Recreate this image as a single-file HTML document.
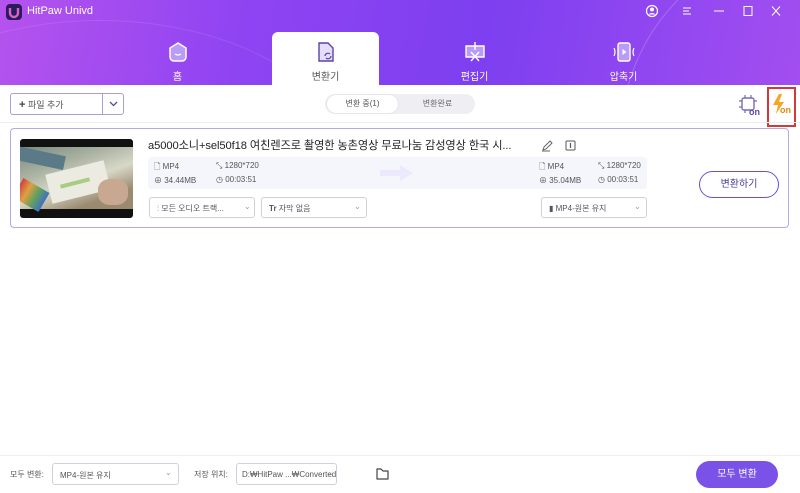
<!DOCTYPE html>
<html><head><meta charset="utf-8">
<style>
*{box-sizing:border-box;margin:0;padding:0}
body{width:800px;height:493px;overflow:hidden;background:#fff;font-family:"Liberation Sans","Noto Sans CJK KR",sans-serif;position:relative;color:#333}
.hdr{position:absolute;left:0;top:0;width:800px;height:85px;background:linear-gradient(100deg,#b553ee 0%,#8f44f2 30%,#7d3ff0 60%,#a24ef0 100%);overflow:hidden}
.arc{position:absolute;border:1px solid rgba(255,255,255,.1);border-radius:50%}
.abs{position:absolute}
.tab{position:absolute;top:32px;width:107px;height:53px;text-align:center;color:#fff;font-size:10px}
.tab svg{display:block;margin:9px auto 5px}
.sel{background:#fff;border-radius:6px 6px 0 0;color:#555}
.btn{position:absolute;border:1px solid #d0d0dc;border-radius:3px;background:#fff;font-size:9px;color:#555}
.sm{font-size:8px;color:#555;position:absolute}
</style></head><body>
<div class="hdr">
<div class="arc" style="left:620px;top:-60px;width:400px;height:400px;border-color:rgba(255,255,255,.2)"></div>
<div class="arc" style="left:-150px;top:20px;width:500px;height:300px"></div>
</div>
<div class="abs" style="left:6px;top:4px;width:16px;height:16px;border-radius:4px;background:#2a1a5e"><svg width="16" height="16"><path d="M4 4v5a4 4 0 0 0 8 0V4" stroke="#e060c0" stroke-width="2.4" fill="none"/></svg></div>
<div class="abs" style="left:27px;top:5px;color:#fff;font-size:11px">HitPaw Univd</div>
<svg class="abs" style="left:645px;top:4px" width="150" height="14">
<circle cx="7" cy="7" r="5.5" fill="none" stroke="#fff" stroke-width="1.2"/><circle cx="7" cy="5.5" r="2" fill="#fff"/><path d="M3.5 10.5a4 3 0 0 1 7 0" fill="#fff"/>
<path d="M38 4h8M38 7h6M38 10h8" stroke="#fff" stroke-width="1"/>
<path d="M69 7h10" stroke="#fff" stroke-width="1"/>
<rect x="99" y="2.5" width="8" height="9" fill="none" stroke="#fff" stroke-width="1"/>
<path d="M127 2.5l8 9M135 2.5l-8 9" stroke="#fff" stroke-width="1"/>
</svg>
<div class="tab" style="left:124px"><svg width="20" height="22" viewBox="0 0 20 22"><path d="M10 2l8 5v9a4 4 0 0 1-4 4H6a4 4 0 0 1-4-4V7z" fill="#b89cf7" stroke="#fff" stroke-width="1.5"/><path d="M7 13q3 2 6 0" stroke="#fff" stroke-width="1.3" fill="none"/></svg>홈</div>
<div class="tab sel" style="left:272px"><svg width="20" height="22" viewBox="0 0 20 22"><path d="M3 2h9l5 5v13H3z" fill="#e6dcfb" stroke="#5a45a8" stroke-width="1.4"/><path d="M9 15a3 3 0 0 1 5-2M15 15a3 3 0 0 1-5 2" stroke="#5a45a8" stroke-width="1.2" fill="none"/></svg>변환기</div>
<div class="tab" style="left:421px"><svg width="26" height="22" viewBox="0 0 26 22"><path d="M4 5h18v11H4z" fill="#b89cf7" stroke="#fff" stroke-width="1.4"/><path d="M13 1v8M9 20l8-9M17 20l-8-9" stroke="#fff" stroke-width="1.4"/></svg>편집기</div>
<div class="tab" style="left:570px"><svg width="26" height="22" viewBox="0 0 26 22"><rect x="7" y="2" width="12" height="18" rx="2" fill="#b89cf7" stroke="#fff" stroke-width="1.4"/><path d="M11.5 8l4 3-4 3z" fill="#fff"/><path d="M3 7q2 4 0 8M23 7q-2 4 0 8" stroke="#fff" stroke-width="1.2" fill="none"/></svg>압축기</div>
<div class="btn" style="left:10px;top:93px;width:114px;height:22px;border-color:#a99fd8">
<span class="abs" style="left:8px;top:4px;font-size:9px"><b style="font-size:11px;color:#444">+</b> 파일 추가</span>
<span class="abs" style="left:91px;top:0;width:1px;height:20px;background:#a99fd8"></span>
<svg class="abs" style="left:98px;top:7px" width="9" height="6"><path d="M1 1l3.5 3.5L8 1" stroke="#5a45a8" stroke-width="1.3" fill="none"/></svg>
</div>
<div class="abs" style="left:325px;top:94px;width:150px;height:20px;border-radius:10px;background:#efeff3"></div>
<div class="abs" style="left:327px;top:95px;width:71px;height:18px;border-radius:9px;background:#fff;box-shadow:0 0 2px rgba(0,0,0,.1);font-size:8px;color:#555;text-align:center;line-height:18px">변환 중(1)</div>
<div class="abs" style="left:405px;top:95px;width:65px;font-size:8px;color:#666;text-align:center;line-height:18px">변환완료</div>
<svg class="abs" style="left:738px;top:94px" width="24" height="22"><rect x="4" y="4" width="12" height="12" rx="2" fill="none" stroke="#7a6ab8" stroke-width="1.4"/><path d="M7 1v3M13 1v3M7 16v3M1 7h3M1 13h3M16 7h3" stroke="#7a6ab8" stroke-width="1.2"/><text x="11" y="21" font-size="9" fill="#5a4aa8" font-family="Liberation Sans" font-weight="bold">on</text></svg>
<div class="abs" style="left:767px;top:87px;width:29px;height:40px;border:2px solid #d23a3a"></div>
<svg class="abs" style="left:770px;top:93px" width="24" height="24"><path d="M9 1L3 12h5l-2 9 8-12H9l3-8z" fill="#f5a623"/><text x="10" y="20" font-size="9" fill="#e08a10" font-family="Liberation Sans" font-weight="bold">on</text></svg>
<div class="abs" style="left:0;top:122px;width:800px;height:1px;background:#ececf0"></div>
<div class="abs" style="left:10px;top:128px;width:779px;height:100px;border:1px solid #b3a9e4;border-radius:4px"></div>
<div class="abs" style="left:20px;top:139px;width:113px;height:79px;border-radius:3px;background:#111;overflow:hidden">
<div class="abs" style="left:0;top:8px;width:113px;height:62px;background:linear-gradient(160deg,#7a8a80,#a8b0a0 30%,#d8d8c8 55%,#9a8a70 80%)"></div>
<div class="abs" style="left:-5px;top:12px;width:50px;height:14px;background:#5a7a88;transform:rotate(12deg)"></div>
<div class="abs" style="left:28px;top:28px;width:60px;height:30px;background:#ecebe2;transform:rotate(-14deg)"></div>
<div class="abs" style="left:40px;top:42px;width:30px;height:4px;background:#a8cc80;transform:rotate(-14deg)"></div>
<div class="abs" style="left:-4px;top:45px;width:30px;height:22px;background:linear-gradient(90deg,#d04040,#e0a040,#60a060,#4070c0);transform:rotate(30deg)"></div>
<div class="abs" style="left:78px;top:40px;width:30px;height:26px;border-radius:40%;background:#c8a890"></div>
</div>
<div class="abs" style="left:148px;top:137px;font-size:11.2px;color:#222;white-space:nowrap;letter-spacing:-0.1px">a5000소니+sel50f18 여친렌즈로 촬영한 농촌영상 무료나눔 감성영상 한국 시...</div>
<svg class="abs" style="left:540px;top:139px" width="40" height="13"><path d="M3 11l1-3 6-6 2 2-6 6zM2 12h8" stroke="#666" stroke-width="1" fill="none"/><rect x="26" y="2" width="9" height="9" rx="1" fill="none" stroke="#555" stroke-width="1"/><path d="M30.5 4v5" stroke="#555" stroke-width="1.2"/></svg>
<div class="abs" style="left:148px;top:157px;width:499px;height:32px;background:#f5f5fc;border-radius:3px"></div>
<svg class="abs" style="left:380px;top:163px" width="35" height="20"><path d="M0 7h20V2l13 8-13 8v-5H0z" fill="#ebe9fb"/></svg>
<div class="sm" style="left:154px;top:161px">🗋 MP4</div>
<div class="sm" style="left:216px;top:161px">⤡ 1280*720</div>
<div class="sm" style="left:154px;top:175px">⊕ 34.44MB</div>
<div class="sm" style="left:216px;top:175px">◷ 00:03:51</div>
<div class="sm" style="left:539px;top:161px">🗋 MP4</div>
<div class="sm" style="left:598px;top:161px">⤡ 1280*720</div>
<div class="sm" style="left:539px;top:175px">⊕ 35.04MB</div>
<div class="sm" style="left:598px;top:175px">◷ 00:03:51</div>
<div class="btn" style="left:149px;top:197px;width:106px;height:21px"><span class="abs" style="left:7px;top:5px;font-size:8px">⫶ 모든 오디오 트랙...</span><span class="abs" style="left:94px;top:4px;font-size:8px;color:#999">⌄</span></div>
<div class="btn" style="left:261px;top:197px;width:106px;height:21px"><span class="abs" style="left:7px;top:5px;font-size:8px"><b>Tr</b> 자막 없음</span><span class="abs" style="left:92px;top:4px;font-size:8px;color:#999">⌄</span></div>
<div class="btn" style="left:541px;top:197px;width:106px;height:21px"><span class="abs" style="left:7px;top:5px;font-size:8px">▮ MP4-원본 유지</span><span class="abs" style="left:92px;top:4px;font-size:8px;color:#999">⌄</span></div>
<div class="abs" style="left:699px;top:171px;width:80px;height:27px;border:1.5px solid #6b52c8;border-radius:14px;text-align:center;line-height:25px;font-size:10px;color:#4a3a9a">변환하기</div>
<div class="abs" style="left:0;top:455px;width:800px;height:1px;background:#f0f0f3"></div>
<div class="abs" style="left:10px;top:469px;font-size:8px;color:#555">모두 변환:</div>
<div class="btn" style="left:52px;top:463px;width:127px;height:22px"><span class="abs" style="left:7px;top:6px;font-size:8px">MP4-원본 유지</span><span class="abs" style="left:112px;top:4px;font-size:8px;color:#999">⌄</span></div>
<div class="abs" style="left:194px;top:469px;font-size:8px;color:#555">저장 위치:</div>
<div class="btn" style="left:236px;top:463px;width:101px;height:22px"><span class="abs" style="left:5px;top:6px;font-size:8px;white-space:nowrap">D:₩HitPaw ...₩Converted</span><span class="abs" style="left:89px;top:4px;font-size:8px;color:#999">⌄</span></div>
<svg class="abs" style="left:375px;top:466px" width="16" height="15"><path d="M2 3h4l2 2h5v8H2z" fill="none" stroke="#444" stroke-width="1.2" stroke-linejoin="round"/></svg>
<div class="abs" style="left:696px;top:461px;width:82px;height:27px;border-radius:14px;background:#7b52e8;color:#fff;text-align:center;line-height:27px;font-size:10px">모두 변환</div>
</body></html>
